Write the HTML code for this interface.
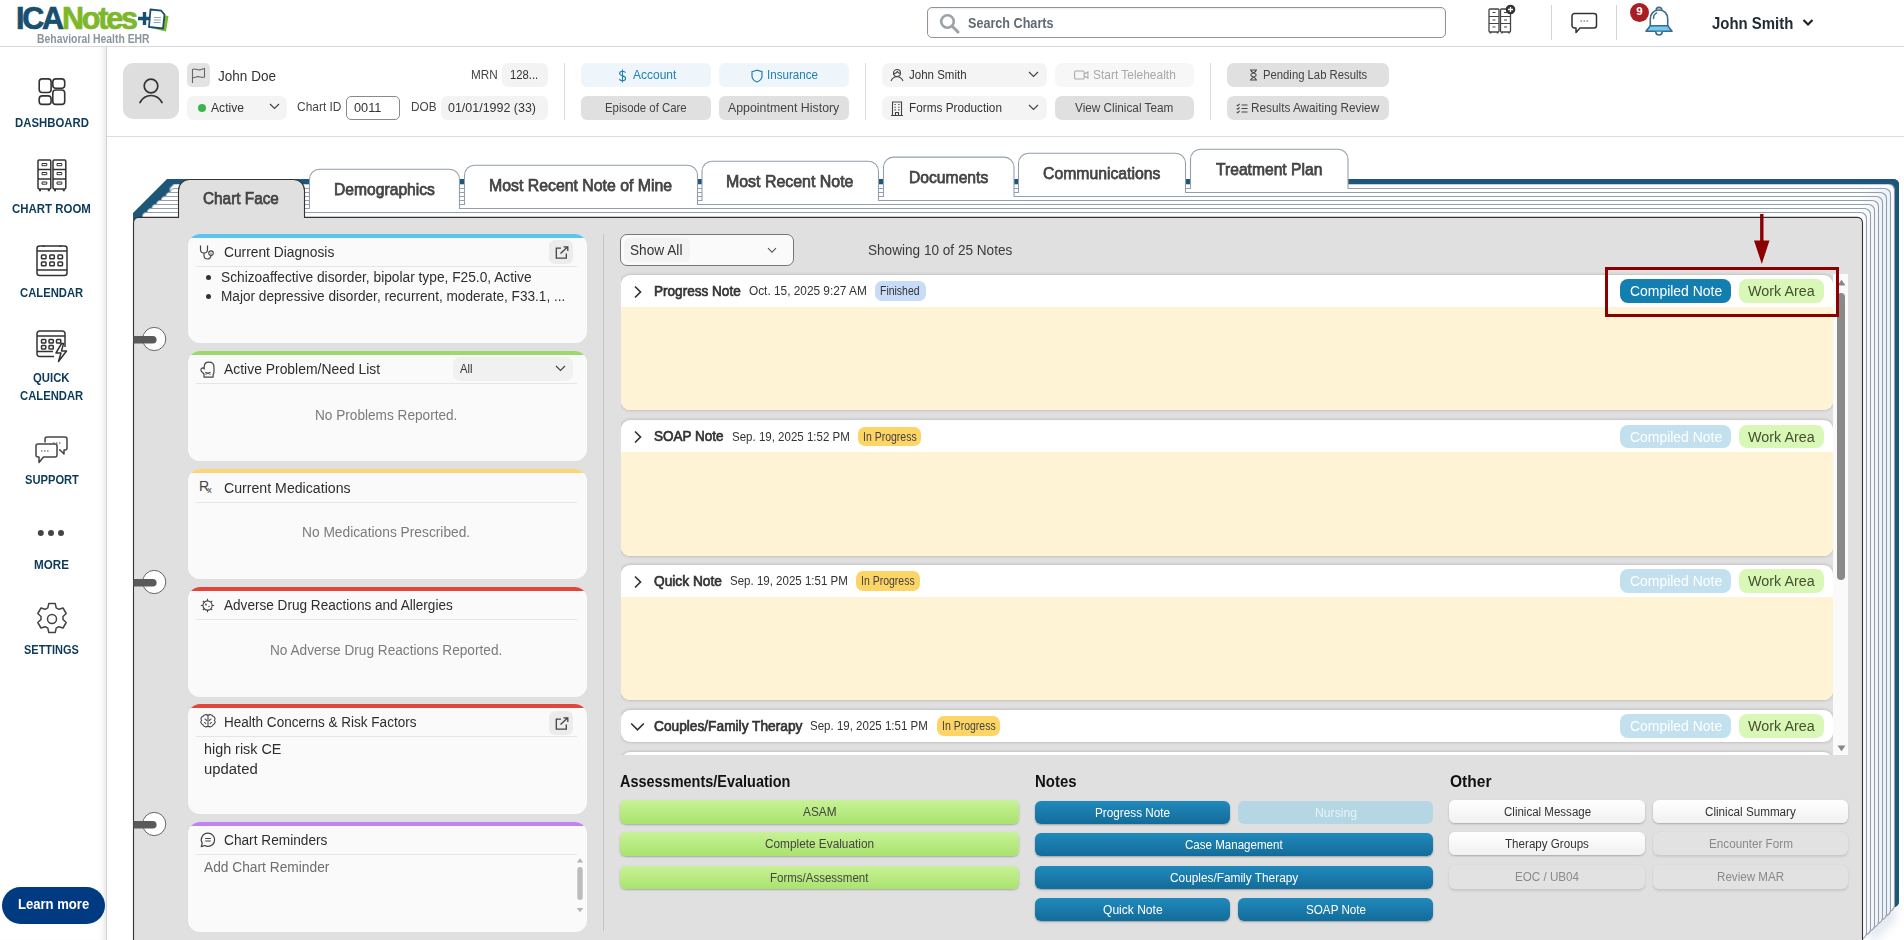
<!DOCTYPE html>
<html><head><meta charset="utf-8">
<style>
*{box-sizing:border-box;margin:0;padding:0}
html,body{width:1904px;height:940px;overflow:hidden;background:#fff;font-family:"Liberation Sans",sans-serif;color:#333}
.a{position:absolute}
.t{position:absolute;white-space:nowrap;line-height:1}
.btn{position:absolute;display:flex;align-items:center;justify-content:center;white-space:nowrap;line-height:1}
svg{position:absolute;overflow:visible}
</style></head><body>

<!-- ===== TOP HEADER ===== -->
<div class="a" style="left:0;top:0;width:1904px;height:47px;background:#fff;border-bottom:1px solid #d9d9d9"></div>
<!-- logo -->
<div class="t" style="left:16px;top:3px;font-size:30.5px;font-weight:bold;letter-spacing:-2.2px;color:#174f6e;-webkit-text-stroke:0.7px currentColor"><span>ICA</span><span style="color:#7cb829;-webkit-text-stroke:0.7px #7cb829">Notes</span></div>
<svg style="left:137px;top:8px" width="32" height="26" viewBox="0 0 32 26">
 <path d="M1 10.5h13M7.5 4v13" stroke="#174f6e" stroke-width="3.4" fill="none"/>
 <path d="M14 20 L29 23.5 L31.5 8 L28 7.5" fill="#7cb829"/>
 <path d="M13.5 1.5 L24 2.5 L27.5 6.5 L26 20.5 L12 19 Z" fill="#fff" stroke="#174f6e" stroke-width="1.8"/>
 <path d="M17 9.5h7M16.8 12h7M16.6 14.5h7" stroke="#8aa3b5" stroke-width="1"/>
</svg>
<div class="t" style="left:37.3px;top:33.10px;font-size:12.03px;font-weight:bold;color:#8a959d;transform:scaleX(0.865);transform-origin:0 0;">Behavioral Health EHR</div>

<!-- search -->
<div class="a" style="left:927px;top:7px;width:519px;height:31px;border:1.3px solid #8c959c;border-radius:5px;box-shadow:inset 0 1px 2px rgba(0,0,0,.08)"></div>
<svg style="left:939px;top:13px" width="22" height="22" viewBox="0 0 22 22"><circle cx="8.5" cy="8.5" r="6.3" stroke="#9aa1a7" stroke-width="2.6" fill="none"/><path d="M13 13l6 6" stroke="#9aa1a7" stroke-width="3" stroke-linecap="round"/></svg>
<div class="t" style="left:967.8px;top:16.20px;font-size:14.78px;font-weight:bold;color:#5f6b74;transform:scaleX(0.854);transform-origin:0 0;">Search Charts</div>

<!-- cabinet-plus icon -->
<svg style="left:1488px;top:7px" width="30" height="28" viewBox="0 0 30 28">
 <g stroke="#444" stroke-width="1.3" fill="#fff">
  <rect x="1" y="2" width="10" height="23" rx="1"/>
  <rect x="12.5" y="2" width="10" height="23" rx="1"/>
 </g>
 <g stroke="#444" stroke-width="1" fill="none">
  <path d="M1 9.5h10M1 16.5h10M12.5 9.5h10M12.5 16.5h10"/>
  <path d="M4.5 5.5h3M4.5 13h3M4.5 20h3M16 5.5h3M16 13h3M16 20h3"/>
  <path d="M2.5 25v1.5M9.5 25v1.5M14 25v1.5M21 25v1.5" stroke-width="1.5"/>
 </g>
 <circle cx="22.5" cy="2.5" r="4.8" fill="#333"/>
 <path d="M22.5 0v5M20 2.5h5" stroke="#fff" stroke-width="1.3"/>
</svg>
<div class="a" style="left:1551px;top:5px;width:1px;height:35px;background:#d5d5d5"></div>
<!-- chat -->
<svg style="left:1571px;top:12px" width="28" height="22" viewBox="0 0 28 22">
 <path d="M3.5 1.5h19.5a2.5 2.5 0 0 1 2.5 2.5v9.5a2.5 2.5 0 0 1-2.5 2.5H9l-4 4.5v-4.5H3.5A2.5 2.5 0 0 1 1 13.5V4a2.5 2.5 0 0 1 2.5-2.5z" fill="#fff" stroke="#333" stroke-width="1.5" stroke-linejoin="round"/>
 <path d="M9.5 9h1.5M12.5 9h1.5M15.5 9h1.5" stroke="#555" stroke-width="1"/>
</svg>
<div class="a" style="left:1616px;top:5px;width:1px;height:35px;background:#d5d5d5"></div>
<!-- bell -->
<svg style="left:1644px;top:6px" width="30" height="30" viewBox="0 0 30 30">
 <path d="M12.2 4.2a2.8 2.8 0 0 1 5.6 0" fill="#fff" stroke="#3b6a8a" stroke-width="1.6"/>
 <path d="M6.3 21.5V13C6.3 7.5 10 4 15 4s8.7 3.5 8.7 9v8.5z" fill="#fff" stroke="#3b6a8a" stroke-width="1.6" stroke-linejoin="round"/>
 <path d="M6.3 19.8h17.4l4.3 5.5H2z" fill="#6fcdf3" stroke="#3b6a8a" stroke-width="1.6" stroke-linejoin="round"/>
 <path d="M11.8 25.8a3.2 3.2 0 0 0 6.4 0" fill="#fff" stroke="#3b6a8a" stroke-width="1.6"/>
 <path d="M9.5 12.5c0-2.8 1.3-4.8 3.3-5.6" fill="none" stroke="#3b6a8a" stroke-width="1.4" stroke-linecap="round"/>
</svg>
<div class="a" style="left:1630px;top:3px;width:19px;height:19px;border-radius:50%;background:#a81e22"></div>
<div class="t" style="left:1630px;top:6px;width:19px;text-align:center;font-size:11.5px;font-weight:bold;color:#fff">9</div>
<div class="t" style="left:1712.0px;top:15.90px;font-size:16.67px;font-weight:bold;color:#222c35;transform:scaleX(0.896);transform-origin:0 0;">John Smith</div>
<svg style="left:1802px;top:18px" width="12" height="9" viewBox="0 0 12 9"><path d="M1.5 2l4.5 4.5 4.5-4.5" stroke="#222" stroke-width="2.2" fill="none"/></svg>

<!-- ===== SIDEBAR ===== -->
<div class="a" style="left:0;top:47px;width:107px;height:893px;background:#fff;border-right:1px solid #d2d2d2;box-shadow:inset -7px 0 6px -5px rgba(0,0,0,.10)"></div>
<!-- dashboard icon -->
<svg style="left:38px;top:78px" width="28" height="28" viewBox="0 0 28 28"><g fill="none" stroke="#333" stroke-width="1.6">
 <rect x="1.2" y="0.9" width="11.9" height="13.6" rx="3"/><rect x="14.8" y="0.9" width="11.9" height="9.3" rx="3"/>
 <rect x="1.2" y="17.9" width="11.9" height="8.5" rx="3"/><rect x="14.8" y="12" width="11.9" height="14.4" rx="3"/></g></svg>
<div class="t" style="left:14.5px;top:117.40px;font-size:12.46px;font-weight:bold;color:#0d3a58;transform:scaleX(0.913);transform-origin:0 0;">DASHBOARD</div>
<!-- chart room icon -->
<svg style="left:37px;top:159px" width="30" height="34" viewBox="0 0 30 34"><g fill="none" stroke="#333" stroke-width="1.5">
 <rect x="1" y="1" width="12.8" height="29" rx="1.2"/><rect x="16" y="1" width="12.8" height="29" rx="1.2"/>
 <path d="M1 10.5h12.8M1 20h12.8M16 10.5h12.8M16 20h12.8"/>
 <path d="M5 4.5h4.8v2.2H5zM5 13.5h4.8v2.2H5zM5 23h4.8v2.2H5zM20 4.5h4.8v2.2H20zM20 13.5h4.8v2.2H20zM20 23h4.8v2.2H20z" stroke-width="1"/>
 <path d="M3 30v2.3M11.8 30v2.3M18 30v2.3M26.8 30v2.3" stroke-width="2"/></g></svg>
<div class="t" style="left:12.0px;top:202.50px;font-size:12.46px;font-weight:bold;color:#0d3a58;transform:scaleX(0.920);transform-origin:0 0;">CHART ROOM</div>
<!-- calendar icon -->
<svg style="left:36px;top:245px" width="32" height="32" viewBox="0 0 32 32"><g fill="none" stroke="#333" stroke-width="1.5">
 <rect x="1" y="1" width="30" height="29.5" rx="2.5"/><path d="M1 6h30M1 25h30"/>
 <path d="M7.5 0.5v1.5M24.5 0.5v1.5" stroke-width="2"/>
 <rect x="5.5" y="10" width="4.5" height="3.8" rx="0.8"/><rect x="13.8" y="10" width="4.5" height="3.8" rx="0.8"/><rect x="22" y="10" width="4.5" height="3.8" rx="0.8"/>
 <rect x="5.5" y="17" width="4.5" height="3.8" rx="0.8"/><rect x="13.8" y="17" width="4.5" height="3.8" rx="0.8"/><rect x="22" y="17" width="4.5" height="3.8" rx="0.8"/></g></svg>
<div class="t" style="left:19.9px;top:287.00px;font-size:12.46px;font-weight:bold;color:#0d3a58;transform:scaleX(0.904);transform-origin:0 0;">CALENDAR</div>
<!-- quick calendar -->
<svg style="left:36px;top:330px" width="32" height="33" viewBox="0 0 32 33"><g fill="none" stroke="#333" stroke-width="1.5">
 <path d="M18 26.5H3.5A2.5 2.5 0 0 1 1 24V3.5A2.5 2.5 0 0 1 3.5 1h23A2.5 2.5 0 0 1 29 3.5V17"/><path d="M1 6h28M1 21.5h16"/>
 <rect x="5.5" y="9.5" width="4.3" height="3.6" rx="0.8"/><rect x="13" y="9.5" width="4.3" height="3.6" rx="0.8"/><rect x="20.5" y="9.5" width="4.3" height="3.6" rx="0.8"/>
 <rect x="5.5" y="15.5" width="4.3" height="3.6" rx="0.8"/><rect x="13" y="15.5" width="4.3" height="3.6" rx="0.8"/>
 <path d="M25.5 13.5l-5.5 9.5h5l-2.5 8.5 8-10.5h-5l2-7.5z" fill="#fff" stroke-linejoin="round"/></g></svg>
<div class="t" style="left:33.2px;top:372.30px;font-size:12.46px;font-weight:bold;color:#0d3a58;transform:scaleX(0.910);transform-origin:0 0;">QUICK</div>
<div class="t" style="left:19.9px;top:389.60px;font-size:12.46px;font-weight:bold;color:#0d3a58;transform:scaleX(0.904);transform-origin:0 0;">CALENDAR</div>
<!-- support -->
<svg style="left:35px;top:436px" width="34" height="30" viewBox="0 0 34 30"><g fill="none" stroke="#444" stroke-width="1.5" stroke-linejoin="round">
 <path d="M10 6.5V3a2 2 0 0 1 2-2h18a2 2 0 0 1 2 2v9a2 2 0 0 1-2 2h-1v4l-4-4h-1"/>
 <path d="M3 8h17a2 2 0 0 1 2 2v9a2 2 0 0 1-2 2H8.5L4 26.5V21H3a2 2 0 0 1-2-2v-9a2 2 0 0 1 2-2z" fill="#fff"/>
 <path d="M6 15h1.5M9 15h1.5M12 15h1.5M18 7h1.5M21 7h1.5M24 7h1.5" stroke-width="1.2"/></g></svg>
<div class="t" style="left:24.5px;top:474.40px;font-size:12.46px;font-weight:bold;color:#0d3a58;transform:scaleX(0.896);transform-origin:0 0;">SUPPORT</div>
<!-- more -->
<svg style="left:36px;top:529px" width="30" height="8" viewBox="0 0 30 8"><circle cx="4.8" cy="4" r="3" fill="#444"/><circle cx="15" cy="4" r="3" fill="#444"/><circle cx="25" cy="4" r="3" fill="#444"/></svg>
<div class="t" style="left:34.0px;top:559.40px;font-size:12.46px;font-weight:bold;color:#0d3a58;transform:scaleX(0.936);transform-origin:0 0;">MORE</div>
<!-- settings -->
<svg style="left:35px;top:602px" width="34" height="34" viewBox="0 0 34 34"><g fill="none" stroke="#444" stroke-width="1.5" stroke-linejoin="round">
 <path d="M13.8 1.5h6.4l1 4.3 2.6 1.5 4.2-1.3 3.2 5.5-3.2 3v3l3.2 3-3.2 5.5-4.2-1.3-2.6 1.5-1 4.3h-6.4l-1-4.3-2.6-1.5-4.2 1.3-3.2-5.5 3.2-3v-3l-3.2-3 3.2-5.5 4.2 1.3 2.6-1.5z"/>
 <circle cx="17" cy="17" r="4.5"/></g></svg>
<div class="t" style="left:24.0px;top:644.40px;font-size:12.46px;font-weight:bold;color:#0d3a58;transform:scaleX(0.882);transform-origin:0 0;">SETTINGS</div>
<!-- learn more -->
<div class="a" style="left:2px;top:887px;width:103px;height:37px;border-radius:19px;background:#003a80"></div>
<div class="t" style="left:18.2px;top:896.60px;font-size:14.93px;font-weight:bold;color:#fff;transform:scaleX(0.876);transform-origin:0 0;">Learn more</div>

<!-- ===== PATIENT HEADER ===== -->
<div class="a" style="left:107px;top:136px;width:1797px;height:1px;background:#dddddd"></div>
<div class="a" style="left:123px;top:63px;width:56px;height:56px;border-radius:10px;background:#dedede"></div>
<svg style="left:136px;top:76px" width="30" height="30" viewBox="0 0 30 30"><circle cx="15" cy="10" r="6.8" fill="none" stroke="#333" stroke-width="1.7"/><path d="M4 26.5c2.5-4.5 6.3-7 11-7s8.5 2.5 11 7" fill="none" stroke="#333" stroke-width="1.7" stroke-linecap="round"/></svg>
<div class="a" style="left:187px;top:63px;width:23px;height:24px;border-radius:5px;background:#e3e3e3"></div>
<svg style="left:191px;top:67px" width="16" height="17" viewBox="0 0 16 17"><path d="M1.5 16V2.5c3-1.8 5.5 1.5 8.5 0l3.5-1V10c-3 1.5-5.5-1.5-8.5 0l-3.5 1" fill="none" stroke="#666" stroke-width="1.1"/></svg>
<div class="t" style="left:218.0px;top:69.00px;font-size:14.49px;color:#333;transform:scaleX(0.935);transform-origin:0 0;">John Doe</div>
<div class="t" style="left:470.5px;top:70.20px;font-size:11.88px;color:#444;transform:scaleX(0.987);transform-origin:0 0;">MRN</div>
<div class="a" style="left:502px;top:63px;width:46px;height:24px;border-radius:6px;background:#f3f3f3"></div>
<div class="t" style="left:509.6px;top:70.20px;font-size:11.88px;color:#333;transform:scaleX(0.948);transform-origin:0 0;">128...</div>
<div class="a" style="left:187px;top:96px;width:100px;height:24px;border-radius:7px;background:#f4f4f4"></div>
<div class="a" style="left:198px;top:103.5px;width:8px;height:8px;border-radius:50%;background:#3bb54a"></div>
<div class="t" style="left:210.5px;top:102.70px;font-size:11.88px;color:#333;transform:scaleX(1.020);transform-origin:0 0;">Active</div>
<svg style="left:269px;top:103px" width="11" height="7" viewBox="0 0 11 7"><path d="M1 1l4.5 4.5L10 1" fill="none" stroke="#444" stroke-width="1.2"/></svg>
<div class="t" style="left:297.2px;top:102.20px;font-size:11.88px;color:#444;transform:scaleX(1.006);transform-origin:0 0;">Chart ID</div>
<div class="a" style="left:346px;top:96px;width:54px;height:24px;border-radius:5px;border:1px solid #8a8a8a;background:#fff"></div>
<div class="t" style="left:354.3px;top:102.70px;font-size:11.88px;color:#333;transform:scaleX(1.072);transform-origin:0 0;">0011</div>
<div class="t" style="left:410.6px;top:102.20px;font-size:11.88px;color:#444;transform:scaleX(0.994);transform-origin:0 0;">DOB</div>
<div class="a" style="left:441px;top:96px;width:107px;height:24px;border-radius:6px;background:#f3f3f3"></div>
<div class="t" style="left:447.7px;top:102.70px;font-size:11.88px;color:#333;transform:scaleX(1.049);transform-origin:0 0;">01/01/1992 (33)</div>
<div class="a" style="left:564px;top:63px;width:1px;height:57px;background:#dcdcdc"></div>

<div class="a" style="left:581px;top:63px;width:130px;height:24px;border-radius:6px;background:#eef5fb"></div>
<svg style="left:617.5px;top:68.5px" width="9" height="14" viewBox="0 0 9 14"><path d="M7.5 3.7C7 2.8 6 2.3 4.6 2.3 3 2.3 1.6 3.1 1.6 4.5s1.3 1.8 3 2.3c1.7.5 3 1 3 2.5S6.2 11.7 4.5 11.7C3 11.7 2 11.1 1.4 10.1M4.5 0.5v13" fill="none" stroke="#1e7fb3" stroke-width="1.1"/></svg>
<div class="t" style="left:632.8px;top:69.00px;font-size:12.32px;color:#1e7fb3;transform:scaleX(0.975);transform-origin:0 0;">Account</div>
<div class="a" style="left:719px;top:63px;width:130px;height:24px;border-radius:6px;background:#eef5fb"></div>
<svg style="left:750.5px;top:68.5px" width="12" height="14" viewBox="0 0 12 14"><path d="M6 1.2L1 2.8v4.2c0 3 2.2 4.9 5 6 2.8-1.1 5-3 5-6V2.8z" fill="none" stroke="#1e7fb3" stroke-width="1.2"/></svg>
<div class="t" style="left:767.2px;top:69.00px;font-size:12.32px;color:#1e7fb3;transform:scaleX(0.941);transform-origin:0 0;">Insurance</div>
<div class="a" style="left:581px;top:96px;width:130px;height:24px;border-radius:6px;background:#e0e0e0"></div>
<div class="t" style="left:604.6px;top:102.10px;font-size:12.32px;color:#444;transform:scaleX(0.925);transform-origin:0 0;">Episode of Care</div>
<div class="a" style="left:719px;top:96px;width:130px;height:24px;border-radius:6px;background:#e0e0e0"></div>
<div class="t" style="left:728.1px;top:102.10px;font-size:12.32px;color:#444;transform:scaleX(1.004);transform-origin:0 0;">Appointment History</div>
<div class="a" style="left:865px;top:63px;width:1px;height:57px;background:#dcdcdc"></div>

<div class="a" style="left:882px;top:63px;width:165px;height:24px;border-radius:7px;background:#f4f4f4"></div>
<svg style="left:890px;top:68px" width="14" height="14" viewBox="0 0 14 14"><circle cx="7" cy="5" r="3.5" fill="none" stroke="#444" stroke-width="1.1"/><path d="M1 13c1.2-3 3.3-4.3 6-4.3s4.8 1.3 6 4.3M3.5 5.5c1.5.3 3-.5 3.8-2 .8 1.3 2 2 3.4 2" fill="none" stroke="#444" stroke-width="1.1"/></svg>
<div class="t" style="left:908.8px;top:70.20px;font-size:11.88px;color:#333;transform:scaleX(0.969);transform-origin:0 0;">John Smith</div>
<svg style="left:1028px;top:71px" width="11" height="7" viewBox="0 0 11 7"><path d="M1 1l4.5 4.5L10 1" fill="none" stroke="#444" stroke-width="1.2"/></svg>
<div class="a" style="left:882px;top:96px;width:165px;height:24px;border-radius:7px;background:#f4f4f4"></div>
<svg style="left:890px;top:101px" width="14" height="15" viewBox="0 0 14 15"><path d="M1 14.5h12M2.5 14.5V1h9v13.5M5.5 14.5v-3h3v3M4.5 3.5h1.3M8.2 3.5h1.3M4.5 6.2h1.3M8.2 6.2h1.3M4.5 8.9h1.3M8.2 8.9h1.3" fill="none" stroke="#444" stroke-width="1.1"/></svg>
<div class="t" style="left:908.8px;top:102.70px;font-size:11.88px;color:#333;transform:scaleX(0.992);transform-origin:0 0;">Forms Production</div>
<svg style="left:1028px;top:104px" width="11" height="7" viewBox="0 0 11 7"><path d="M1 1l4.5 4.5L10 1" fill="none" stroke="#444" stroke-width="1.2"/></svg>
<div class="a" style="left:1055px;top:63px;width:139px;height:24px;border-radius:7px;background:#f7f7f7"></div>
<svg style="left:1074px;top:70px" width="15" height="10" viewBox="0 0 15 10"><rect x="0.6" y="1" width="9.5" height="8" rx="1" fill="none" stroke="#aaa" stroke-width="1.1"/><path d="M10.1 4l3.8-2v6l-3.8-2" fill="none" stroke="#aaa" stroke-width="1.1"/></svg>
<div class="t" style="left:1092.6px;top:69.00px;font-size:12.32px;color:#a8a8a8;transform:scaleX(0.970);transform-origin:0 0;">Start Telehealth</div>
<div class="a" style="left:1055px;top:96px;width:139px;height:24px;border-radius:7px;background:#e0e0e0"></div>
<div class="t" style="left:1075.0px;top:102.10px;font-size:12.32px;color:#444;transform:scaleX(0.956);transform-origin:0 0;">View Clinical Team</div>
<div class="a" style="left:1210px;top:63px;width:1px;height:57px;background:#dcdcdc"></div>
<div class="a" style="left:1227px;top:63px;width:162px;height:24px;border-radius:7px;background:#e0e0e0"></div>
<svg style="left:1249px;top:69px" width="9" height="12" viewBox="0 0 9 12"><path d="M1 1h7M1 11h7M1.8 1c0 3 5.4 3 5.4 5S1.8 8 1.8 11M7.2 1c0 3-5.4 3-5.4 5s5.4 2 5.4 5" fill="none" stroke="#444" stroke-width="1.1"/></svg>
<div class="t" style="left:1262.7px;top:69.00px;font-size:12.32px;color:#444;transform:scaleX(0.917);transform-origin:0 0;">Pending Lab Results</div>
<div class="a" style="left:1227px;top:96px;width:162px;height:24px;border-radius:7px;background:#e0e0e0"></div>
<svg style="left:1235.5px;top:102.5px" width="12" height="11" viewBox="0 0 12 11"><path d="M0.8 1.8l1 1 1.8-2M0.8 5.3l1 1 1.8-2M0.8 8.8l1 1 1.8-2M5.5 2h6M5.5 5.5h6M5.5 9h6" fill="none" stroke="#444" stroke-width="1.1"/></svg>
<div class="t" style="left:1250.8px;top:102.10px;font-size:12.32px;color:#444;transform:scaleX(0.957);transform-origin:0 0;">Results Awaiting Review</div>

<!-- ===== BINDER ===== -->
<svg style="left:0;top:0" width="1904" height="940" viewBox="0 0 1904 940">
<defs><linearGradient id="pg" gradientUnits="userSpaceOnUse" x1="1858" y1="0" x2="1885" y2="0"><stop offset="0" stop-color="#ffffff"/><stop offset="1" stop-color="#eef2f9"/></linearGradient><filter id="bl" x="-50%" y="-50%" width="200%" height="200%"><feGaussianBlur stdDeviation="4"/></filter></defs>
<path d="M1866 925L1896 898V920L1872 944Z" fill="#a9b8d2" opacity="0.3" filter="url(#bl)"/>
<path d="M167 179H1893.5a5.5 5.5 0 0 1 5.5 5.5V901.5a5.5 5.5 0 0 1-5.5 5.5H133V213Z" fill="#1c5678"/>
<path d="M174 184H1888.5a6 6 0 0 1 6 6V905a7 7 0 0 1-7 7H170V188Z" fill="#fbfcfe" stroke="#939fac" stroke-width="1.1"/>
<path d="M167 179H1893.5a5.5 5.5 0 0 1 5.5 5.5V901.5a5.5 5.5 0 0 1-5.5 5.5H1895V184H172Z" fill="#1c5678"/>
<path d="M170.5 192.5a4 4 0 0 1 4 -4H1190.5V159.3a10 10 0 0 1 10 -10H1338a10 10 0 0 1 10 10V188.5H1884.5a6 6 0 0 1 6 6V910.0a6 6 0 0 1 -6 6H170.5Z" fill="url(#pg)" stroke="#939fac" stroke-width="1.1"/>
<path d="M165.83 196.5a4 4 0 0 1 4 -4H1018.5V163.2a10 10 0 0 1 10 -10H1175.5a10 10 0 0 1 10 10V192.5H1880.5a6 6 0 0 1 6 6V913.8a6 6 0 0 1 -6 6H165.83Z" fill="url(#pg)" stroke="#939fac" stroke-width="1.1"/>
<path d="M161.16 200.5a4 4 0 0 1 4 -4H883.5V167.1a10 10 0 0 1 10 -10H1004a10 10 0 0 1 10 10V196.5H1876.5a6 6 0 0 1 6 6V917.6a6 6 0 0 1 -6 6H161.16Z" fill="url(#pg)" stroke="#939fac" stroke-width="1.1"/>
<path d="M156.49 204.5a4 4 0 0 1 4 -4H702V171.3a10 10 0 0 1 10 -10H868.5a10 10 0 0 1 10 10V200.5H1872.5a6 6 0 0 1 6 6V921.4a6 6 0 0 1 -6 6H156.49Z" fill="url(#pg)" stroke="#939fac" stroke-width="1.1"/>
<path d="M151.82 208.5a4 4 0 0 1 4 -4H464.5V175.2a10 10 0 0 1 10 -10H687.5a10 10 0 0 1 10 10V204.5H1868.5a6 6 0 0 1 6 6V925.2a6 6 0 0 1 -6 6H151.82Z" fill="url(#pg)" stroke="#939fac" stroke-width="1.1"/>
<path d="M147.15 212.5a4 4 0 0 1 4 -4H309.5V179.3a10 10 0 0 1 10 -10H449.5a10 10 0 0 1 10 10V208.5H1864.5a6 6 0 0 1 6 6V929.0a6 6 0 0 1 -6 6H147.15Z" fill="url(#pg)" stroke="#939fac" stroke-width="1.1"/>
<path d="M142.48 216.5a4 4 0 0 1 4 -4H1860.5a6 6 0 0 1 6 6V932.8a6 6 0 0 1 -6 6H142.48Z" fill="url(#pg)" stroke="#939fac" stroke-width="1.1"/>
<path d="M133.5 950V222.4a5 5 0 0 1 5 -5H178.5V190.5a11 11 0 0 1 11 -11H293.5a11 11 0 0 1 11 11V217.4H1857.5a5 5 0 0 1 5 5V950Z" fill="#e0e0e0" stroke="#333" stroke-width="1.1"/>
</svg>

<div class="t" style="left:203.0px;top:190.90px;font-size:16.96px;color:#444;transform:scaleX(0.906);transform-origin:0 0;-webkit-text-stroke:0.75px #444;">Chart Face</div>
<div class="t" style="left:333.6px;top:181.90px;font-size:16.81px;color:#444;transform:scaleX(0.932);transform-origin:0 0;-webkit-text-stroke:0.75px #444;">Demographics</div>
<div class="t" style="left:489.0px;top:177.90px;font-size:16.81px;color:#444;transform:scaleX(0.943);transform-origin:0 0;-webkit-text-stroke:0.75px #444;">Most Recent Note of Mine</div>
<div class="t" style="left:726.4px;top:173.90px;font-size:16.81px;color:#444;transform:scaleX(0.948);transform-origin:0 0;-webkit-text-stroke:0.75px #444;">Most Recent Note</div>
<div class="t" style="left:908.6px;top:169.90px;font-size:16.81px;color:#444;transform:scaleX(0.933);transform-origin:0 0;-webkit-text-stroke:0.75px #444;">Documents</div>
<div class="t" style="left:1043.2px;top:165.90px;font-size:16.81px;color:#444;transform:scaleX(0.938);transform-origin:0 0;-webkit-text-stroke:0.75px #444;">Communications</div>
<div class="t" style="left:1215.7px;top:161.90px;font-size:16.81px;color:#444;transform:scaleX(0.931);transform-origin:0 0;-webkit-text-stroke:0.75px #444;">Treatment Plan</div>
<svg style="left:130px;top:324.3px" width="40" height="30" viewBox="0 0 40 30"><circle cx="24.2" cy="15" r="11.6" fill="#fff" stroke="#666" stroke-width="1"/><path d="M3.5 12H22.8a3.8 3.8 0 0 1 0 7.6H3.5z" fill="#5a5a5a"/></svg>
<svg style="left:130px;top:567px" width="40" height="30" viewBox="0 0 40 30"><circle cx="24.2" cy="15" r="11.6" fill="#fff" stroke="#666" stroke-width="1"/><path d="M3.5 12H22.8a3.8 3.8 0 0 1 0 7.6H3.5z" fill="#5a5a5a"/></svg>
<svg style="left:130px;top:809.3px" width="40" height="30" viewBox="0 0 40 30"><circle cx="24.2" cy="15" r="11.6" fill="#fff" stroke="#666" stroke-width="1"/><path d="M3.5 12H22.8a3.8 3.8 0 0 1 0 7.6H3.5z" fill="#5a5a5a"/></svg>
<div class="a" style="left:603px;top:234px;width:1px;height:697px;background:#c4c4c4"></div>
<div class="a" style="left:188px;top:233.7px;width:399px;height:109.6px;border-radius:12px;background:#fafafa;overflow:hidden"><div class="a" style="left:0;top:0;width:399px;height:4px;background:#5bc4f1"></div></div>
<svg style="left:199px;top:244.7px" width="16" height="15" viewBox="0 0 16 15"><path d="M1.5 0.5v4a3.5 3.5 0 0 0 7 0v-4M5 8v2.5a3.5 3.5 0 0 0 7 0V9.5" fill="none" stroke="#444" stroke-width="1.2"/><circle cx="12" cy="8.2" r="2.3" fill="none" stroke="#444" stroke-width="1.1"/><circle cx="12" cy="8.2" r="0.6" fill="#444"/></svg>
<div class="t" style="left:224.3px;top:245.00px;font-size:14.06px;color:#2e2e2e;transform:scaleX(0.981);transform-origin:0 0;">Current Diagnosis</div>
<div class="a" style="left:196px;top:266.0px;width:381px;height:1px;background:#e6e6e6"></div>
<div class="a" style="left:549px;top:240.2px;width:24px;height:24px;border-radius:6px;background:#ececec"></div>
<svg style="left:555px;top:246.2px" width="14" height="13" viewBox="0 0 14 13"><path d="M6 2.2H1.3v10h10V7.5" fill="none" stroke="#444" stroke-width="1.3"/><path d="M5.5 7.5l7-6.5M8.5 0.8h4.3v4.2" fill="none" stroke="#444" stroke-width="1.3"/></svg>
<div class="a" style="left:188px;top:351.1px;width:399px;height:109.6px;border-radius:12px;background:#fafafa;overflow:hidden"><div class="a" style="left:0;top:0;width:399px;height:4px;background:#9cd86a"></div></div>
<svg style="left:199.5px;top:361.3px" width="16" height="18" viewBox="0 0 16 18"><path d="M4.2 7.8V6C4.2 3 6.2 1.2 9 1.2s5 1.8 5 5V11c0 1-.6 1.8-.9 2.5v2.6H4V13L1.3 10.2C.7 9.5.8 7.4 2 7.1l2.2-.6V8.5" fill="none" stroke="#444" stroke-width="1.2" stroke-linejoin="round"/><path d="M5.3 11.3l5.2 2M5.3 13.3l5.2-2" stroke="#444" stroke-width="1.1"/></svg>
<div class="t" style="left:224.3px;top:362.40px;font-size:14.06px;color:#2e2e2e;transform:scaleX(0.990);transform-origin:0 0;">Active Problem/Need List</div>
<div class="a" style="left:196px;top:383.4px;width:381px;height:1px;background:#e6e6e6"></div>
<div class="a" style="left:188px;top:469.2px;width:399px;height:109.6px;border-radius:12px;background:#fafafa;overflow:hidden"><div class="a" style="left:0;top:0;width:399px;height:4px;background:#fcd676"></div></div>
<div class="t" style="left:199px;top:478.7px;font-size:14px;color:#444">R<span style="font-size:9px;position:relative;left:-2px;top:2px">x</span></div>
<div class="t" style="left:224.3px;top:480.50px;font-size:14.06px;color:#2e2e2e;transform:scaleX(1.007);transform-origin:0 0;">Current Medications</div>
<div class="a" style="left:196px;top:501.5px;width:381px;height:1px;background:#e6e6e6"></div>
<div class="a" style="left:188px;top:587.0px;width:399px;height:109.6px;border-radius:12px;background:#fafafa;overflow:hidden"><div class="a" style="left:0;top:0;width:399px;height:4px;background:#e2453a"></div></div>
<svg style="left:199.5px;top:598.0px" width="15" height="15" viewBox="0 0 15 15"><circle cx="7.5" cy="7.5" r="4.6" fill="none" stroke="#444" stroke-width="1.1"/><path d="M7.5 0.8v2.1M7.5 12.1v2.1M0.8 7.5h2.1M12.1 7.5h2.1M2.8 2.8l1.5 1.5M10.7 10.7l1.5 1.5M2.8 12.2l1.5-1.5M10.7 4.3l1.5-1.5" stroke="#444" stroke-width="1.1"/><circle cx="6" cy="6.5" r="0.9" fill="#444"/><circle cx="9" cy="8.5" r="0.7" fill="#444"/></svg>
<div class="t" style="left:224.3px;top:598.30px;font-size:14.06px;color:#2e2e2e;transform:scaleX(0.967);transform-origin:0 0;">Adverse Drug Reactions and Allergies</div>
<div class="a" style="left:196px;top:619.3px;width:381px;height:1px;background:#e6e6e6"></div>
<div class="a" style="left:188px;top:704.0px;width:399px;height:109.6px;border-radius:12px;background:#fafafa;overflow:hidden"><div class="a" style="left:0;top:0;width:399px;height:4px;background:#e2453a"></div></div>
<svg style="left:199.5px;top:714.3px" width="16" height="14" viewBox="0 0 16 14"><path d="M8 1.5C6.5 0 3.5 0.5 3 2.5 1 2.8 0.5 5 1.5 6.3 0.3 7.5 0.8 10 2.8 10.5c.3 2 2.8 3 5.2 1.8 2.4 1.2 4.9.2 5.2-1.8 2-.5 2.5-3 1.3-4.2 1-1.3.5-3.5-1.5-3.8C12.5 0.5 9.5 0 8 1.5zM8 1.5v10.8M4.5 5c1 0 2 .8 2 2M11.5 5c-1 0-2 .8-2 2M4 8.5c1 0 1.8.5 2 1.5M12 8.5c-1 0-1.8.5-2 1.5" fill="none" stroke="#444" stroke-width="1.1"/></svg>
<div class="t" style="left:224.3px;top:715.30px;font-size:14.06px;color:#2e2e2e;transform:scaleX(0.963);transform-origin:0 0;">Health Concerns &amp; Risk Factors</div>
<div class="a" style="left:196px;top:736.3px;width:381px;height:1px;background:#e6e6e6"></div>
<div class="a" style="left:549px;top:710.5px;width:24px;height:24px;border-radius:6px;background:#ececec"></div>
<svg style="left:555px;top:716.5px" width="14" height="13" viewBox="0 0 14 13"><path d="M6 2.2H1.3v10h10V7.5" fill="none" stroke="#444" stroke-width="1.3"/><path d="M5.5 7.5l7-6.5M8.5 0.8h4.3v4.2" fill="none" stroke="#444" stroke-width="1.3"/></svg>
<div class="a" style="left:188px;top:822.1px;width:399px;height:109.6px;border-radius:12px;background:#fafafa;overflow:hidden"><div class="a" style="left:0;top:0;width:399px;height:4px;background:#c182f3"></div></div>
<svg style="left:199.5px;top:832.1px" width="16" height="16" viewBox="0 0 16 16"><path d="M8 1.2a6.6 6.6 0 0 1 0 13.2c-1.2 0-2.3-.3-3.3-.9L1.2 14.6l1.1-3.3A6.6 6.6 0 0 1 8 1.2z" fill="none" stroke="#444" stroke-width="1.2" stroke-linejoin="round"/><path d="M5.2 6.5h5.6M5.2 9h5.6" stroke="#444" stroke-width="1.1"/></svg>
<div class="t" style="left:224.3px;top:833.40px;font-size:14.06px;color:#2e2e2e;transform:scaleX(0.974);transform-origin:0 0;">Chart Reminders</div>
<div class="a" style="left:196px;top:854.4px;width:381px;height:1px;background:#e6e6e6"></div>
<div class="a" style="left:205.5px;top:275px;width:5px;height:5px;border-radius:50%;background:#333"></div>
<div class="a" style="left:205.5px;top:294.3px;width:5px;height:5px;border-radius:50%;background:#333"></div>
<div class="t" style="left:220.7px;top:270.80px;font-size:13.91px;color:#2e2e2e;transform:scaleX(0.988);transform-origin:0 0;">Schizoaffective disorder, bipolar type, F25.0, Active</div>
<div class="t" style="left:220.7px;top:290.20px;font-size:13.91px;color:#2e2e2e;transform:scaleX(0.979);transform-origin:0 0;">Major depressive disorder, recurrent, moderate, F33.1, ...</div>
<div class="a" style="left:453px;top:357px;width:120px;height:24px;border-radius:7px;background:#f1f1f1"></div>
<div class="t" style="left:460.0px;top:363.70px;font-size:11.88px;color:#333;transform:scaleX(0.946);transform-origin:0 0;">All</div>
<svg style="left:554.5px;top:365px" width="11" height="7" viewBox="0 0 11 7"><path d="M1 1l4.5 4.5L10 1" fill="none" stroke="#444" stroke-width="1.2"/></svg>
<div class="t" style="left:315.0px;top:409.40px;font-size:13.91px;color:#7b7b7b;transform:scaleX(0.980);transform-origin:0 0;">No Problems Reported.</div>
<div class="t" style="left:302.3px;top:526.40px;font-size:13.91px;color:#7b7b7b;transform:scaleX(0.989);transform-origin:0 0;">No Medications Prescribed.</div>
<div class="t" style="left:270.4px;top:643.90px;font-size:13.91px;color:#7b7b7b;transform:scaleX(0.982);transform-origin:0 0;">No Adverse Drug Reactions Reported.</div>
<div class="t" style="left:204.1px;top:743.20px;font-size:13.91px;color:#2e2e2e;transform:scaleX(1.032);transform-origin:0 0;">high risk CE</div>
<div class="t" style="left:204.1px;top:763.20px;font-size:13.91px;color:#2e2e2e;transform:scaleX(1.068);transform-origin:0 0;">updated</div>
<div class="t" style="left:204.1px;top:861.00px;font-size:13.91px;color:#6e6e6e;transform:scaleX(0.989);transform-origin:0 0;">Add Chart Reminder</div>
<svg style="left:576px;top:856px" width="8" height="58" viewBox="0 0 8 58"><path d="M0.8 6.5h6.4L4 2.2z" fill="#b4b4b4"/><rect x="1.3" y="11" width="5.4" height="33" rx="2.7" fill="#bcbcbc"/><path d="M0.8 52h6.4L4 56.2z" fill="#b4b4b4"/></svg>

<div class="a" style="left:620px;top:234px;width:174px;height:32px;border-radius:7px;border:1px solid #777;background:#fafafa"></div>
<div class="a" style="left:624px;top:238px;width:66px;height:24px;border-radius:5px;background:#f3f3f3"></div>
<div class="t" style="left:630.0px;top:242.80px;font-size:14.49px;color:#333;transform:scaleX(0.944);transform-origin:0 0;">Show All</div>
<svg style="left:767px;top:247px" width="10" height="7" viewBox="0 0 10 7"><path d="M1 1.2l4 4 4-4" fill="none" stroke="#555" stroke-width="1.1"/></svg>
<div class="t" style="left:868.1px;top:242.80px;font-size:14.49px;color:#3a3a3a;transform:scaleX(0.938);transform-origin:0 0;">Showing 10 of 25 Notes</div>
<div class="a" style="left:620.5px;top:268px;width:1227.5px;height:486.8px;overflow:hidden">
<div class="a" style="left:0.0px;top:6.5px;width:1212px;height:135.5px;border-radius:9px;background:#fff;box-shadow:0 0 3.5px rgba(0,0,0,.25);overflow:hidden">
<div class="a" style="left:0;top:32px;width:1212px;height:104px;background:#fff3d5"></div>
<svg style="left:12px;top:10px" width="10" height="14" viewBox="0 0 10 14"><path d="M2 1.5l5.5 5.5L2 12.5" fill="none" stroke="#333" stroke-width="1.7"/></svg>
<div class="t" style="left:33.0px;top:9.40px;font-size:14.93px;color:#333;transform:scaleX(0.909);transform-origin:0 0;-webkit-text-stroke:0.7px #333;">Progress Note</div>
<div class="t" style="left:128.1px;top:10.50px;font-size:12.32px;color:#333;transform:scaleX(0.961);transform-origin:0 0;">Oct. 15, 2025 9:27 AM</div>
<div class="a" style="left:254.4px;top:6.5px;width:50.8px;height:19.5px;border-radius:7px;background:#c8dbf7"></div>
<div class="t" style="left:259.9px;top:10.50px;font-size:12.32px;color:#333;transform:scaleX(0.850);transform-origin:0 0;">Finished</div>
<div class="a" style="left:999.5px;top:4.6px;width:111px;height:23.7px;border-radius:8px;background:#137fb0"></div>
<div class="t" style="left:1009.2px;top:9.70px;font-size:14.49px;color:#fff;transform:scaleX(0.962);transform-origin:0 0;">Compiled Note</div>
<div class="a" style="left:1118.5px;top:4.6px;width:85px;height:23.7px;border-radius:8px;background:#d9f8b8"></div>
<div class="t" style="left:1127.6px;top:9.70px;font-size:14.49px;color:#46512e;transform:scaleX(0.990);transform-origin:0 0;">Work Area</div>
</div>
<div class="a" style="left:0.0px;top:152.0px;width:1212px;height:135.5px;border-radius:9px;background:#fff;box-shadow:0 0 3.5px rgba(0,0,0,.25);overflow:hidden">
<div class="a" style="left:0;top:32px;width:1212px;height:104px;background:#fff3d5"></div>
<svg style="left:12px;top:10px" width="10" height="14" viewBox="0 0 10 14"><path d="M2 1.5l5.5 5.5L2 12.5" fill="none" stroke="#333" stroke-width="1.7"/></svg>
<div class="t" style="left:33.0px;top:9.40px;font-size:14.93px;color:#333;transform:scaleX(0.905);transform-origin:0 0;-webkit-text-stroke:0.7px #333;">SOAP Note</div>
<div class="t" style="left:111.0px;top:10.50px;font-size:12.32px;color:#333;transform:scaleX(0.935);transform-origin:0 0;">Sep. 19, 2025 1:52 PM</div>
<div class="a" style="left:237.3px;top:6.5px;width:63.6px;height:19.5px;border-radius:7px;background:#fdd466"></div>
<div class="t" style="left:242.6px;top:10.50px;font-size:12.32px;color:#444;transform:scaleX(0.852);transform-origin:0 0;">In Progress</div>
<div class="a" style="left:999.5px;top:4.6px;width:111px;height:23.7px;border-radius:8px;background:#c2e0ee"></div>
<div class="t" style="left:1009.2px;top:9.70px;font-size:14.49px;color:#fff;transform:scaleX(0.962);transform-origin:0 0;">Compiled Note</div>
<div class="a" style="left:1118.5px;top:4.6px;width:85px;height:23.7px;border-radius:8px;background:#d9f8b8"></div>
<div class="t" style="left:1127.6px;top:9.70px;font-size:14.49px;color:#46512e;transform:scaleX(0.990);transform-origin:0 0;">Work Area</div>
</div>
<div class="a" style="left:0.0px;top:296.8px;width:1212px;height:135.5px;border-radius:9px;background:#fff;box-shadow:0 0 3.5px rgba(0,0,0,.25);overflow:hidden">
<div class="a" style="left:0;top:32px;width:1212px;height:104px;background:#fff3d5"></div>
<svg style="left:12px;top:10px" width="10" height="14" viewBox="0 0 10 14"><path d="M2 1.5l5.5 5.5L2 12.5" fill="none" stroke="#333" stroke-width="1.7"/></svg>
<div class="t" style="left:33.0px;top:9.40px;font-size:14.93px;color:#333;transform:scaleX(0.920);transform-origin:0 0;-webkit-text-stroke:0.7px #333;">Quick Note</div>
<div class="t" style="left:109.3px;top:10.50px;font-size:12.32px;color:#333;transform:scaleX(0.935);transform-origin:0 0;">Sep. 19, 2025 1:51 PM</div>
<div class="a" style="left:235.6px;top:6.5px;width:63.6px;height:19.5px;border-radius:7px;background:#fdd466"></div>
<div class="t" style="left:240.9px;top:10.50px;font-size:12.32px;color:#444;transform:scaleX(0.852);transform-origin:0 0;">In Progress</div>
<div class="a" style="left:999.5px;top:4.6px;width:111px;height:23.7px;border-radius:8px;background:#c2e0ee"></div>
<div class="t" style="left:1009.2px;top:9.70px;font-size:14.49px;color:#fff;transform:scaleX(0.962);transform-origin:0 0;">Compiled Note</div>
<div class="a" style="left:1118.5px;top:4.6px;width:85px;height:23.7px;border-radius:8px;background:#d9f8b8"></div>
<div class="t" style="left:1127.6px;top:9.70px;font-size:14.49px;color:#46512e;transform:scaleX(0.990);transform-origin:0 0;">Work Area</div>
</div>
<div class="a" style="left:0.0px;top:441.8px;width:1212px;height:32.2px;border-radius:9px;background:#fff;box-shadow:0 0 3.5px rgba(0,0,0,.25);overflow:hidden">
<svg style="left:9px;top:12px" width="15" height="10" viewBox="0 0 15 10"><path d="M1.2 1.5l6.3 6.3 6.3-6.3" fill="none" stroke="#333" stroke-width="1.7"/></svg>
<div class="t" style="left:33.0px;top:9.40px;font-size:14.93px;color:#333;transform:scaleX(0.919);transform-origin:0 0;-webkit-text-stroke:0.7px #333;">Couples/Family Therapy</div>
<div class="t" style="left:189.8px;top:10.50px;font-size:12.32px;color:#333;transform:scaleX(0.935);transform-origin:0 0;">Sep. 19, 2025 1:51 PM</div>
<div class="a" style="left:316.1px;top:6.5px;width:63.6px;height:19.5px;border-radius:7px;background:#fdd466"></div>
<div class="t" style="left:321.4px;top:10.50px;font-size:12.32px;color:#444;transform:scaleX(0.852);transform-origin:0 0;">In Progress</div>
<div class="a" style="left:999.5px;top:4.6px;width:111px;height:23.7px;border-radius:8px;background:#c2e0ee"></div>
<div class="t" style="left:1009.2px;top:9.70px;font-size:14.49px;color:#fff;transform:scaleX(0.962);transform-origin:0 0;">Compiled Note</div>
<div class="a" style="left:1118.5px;top:4.6px;width:85px;height:23.7px;border-radius:8px;background:#d9f8b8"></div>
<div class="t" style="left:1127.6px;top:9.70px;font-size:14.49px;color:#46512e;transform:scaleX(0.990);transform-origin:0 0;">Work Area</div>
</div>
<div class="a" style="left:0.0px;top:483.7px;width:1212px;height:135.5px;border-radius:9px;background:#fff;box-shadow:0 0 3.5px rgba(0,0,0,.25);overflow:hidden">
<div class="a" style="left:0;top:32px;width:1212px;height:104px;background:#fff3d5"></div>
<svg style="left:12px;top:10px" width="10" height="14" viewBox="0 0 10 14"><path d="M2 1.5l5.5 5.5L2 12.5" fill="none" stroke="#333" stroke-width="1.7"/></svg>
<div class="t" style="left:33.0px;top:9.40px;font-size:14.93px;color:#333;transform:scaleX(0.934);transform-origin:0 0;-webkit-text-stroke:0.7px #333;">Individual Therapy</div>
<div class="t" style="left:155.1px;top:10.50px;font-size:12.32px;color:#333;transform:scaleX(0.935);transform-origin:0 0;">Sep. 19, 2025 1:50 PM</div>
<div class="a" style="left:281.4px;top:6.5px;width:63.6px;height:19.5px;border-radius:7px;background:#fdd466"></div>
<div class="t" style="left:286.7px;top:10.50px;font-size:12.32px;color:#444;transform:scaleX(0.852);transform-origin:0 0;">In Progress</div>
<div class="a" style="left:999.5px;top:4.6px;width:111px;height:23.7px;border-radius:8px;background:#c2e0ee"></div>
<div class="t" style="left:1009.2px;top:9.70px;font-size:14.49px;color:#fff;transform:scaleX(0.962);transform-origin:0 0;">Compiled Note</div>
<div class="a" style="left:1118.5px;top:4.6px;width:85px;height:23.7px;border-radius:8px;background:#d9f8b8"></div>
<div class="t" style="left:1127.6px;top:9.70px;font-size:14.49px;color:#46512e;transform:scaleX(0.990);transform-origin:0 0;">Work Area</div>
</div>
<div class="a" style="left:1212.5px;top:5.699999999999989px;width:15px;height:482px;background:#fafafa"></div>
<svg style="left:1216.0px;top:11px" width="9" height="7" viewBox="0 0 9 7"><path d="M0.5 6.5h8L4.5 0.8z" fill="#888"/></svg>
<div class="a" style="left:1216.0px;top:24.5px;width:8px;height:287px;border-radius:4px;background:#8a8a8a"></div>
<svg style="left:1216.0px;top:476.5px" width="9" height="7" viewBox="0 0 9 7"><path d="M0.5 0.5h8L4.5 6.2z" fill="#888"/></svg>
</div>
<div class="a" style="left:1605px;top:267px;width:234px;height:50px;border:3.3px solid #8b0000"></div>
<svg style="left:1752px;top:213px" width="20" height="52" viewBox="0 0 20 52"><path d="M9.8 1v30" stroke="#8b0000" stroke-width="3.4"/><path d="M2 27.5h15.5L9.8 51z" fill="#8b0000"/></svg>
<div class="t" style="left:620.0px;top:774.10px;font-size:16.96px;font-weight:bold;color:#111;transform:scaleX(0.854);transform-origin:0 0;">Assessments/Evaluation</div>
<div class="t" style="left:1035.0px;top:774.10px;font-size:16.96px;font-weight:bold;color:#111;transform:scaleX(0.883);transform-origin:0 0;">Notes</div>
<div class="t" style="left:1449.6px;top:774.10px;font-size:16.96px;font-weight:bold;color:#111;transform:scaleX(0.920);transform-origin:0 0;">Other</div>
<div class="a" style="left:620px;top:800.4px;width:399px;height:23.2px;border-radius:6px;background:linear-gradient(#c8f296,#a9e36d);box-shadow:0 1px 2px rgba(0,0,0,.25)"></div>
<div class="t" style="left:802.8px;top:806.35px;font-size:12.61px;color:#444;transform:scaleX(0.937);transform-origin:0 0;">ASAM</div>
<div class="a" style="left:620px;top:832.4px;width:399px;height:23.2px;border-radius:6px;background:linear-gradient(#c8f296,#a9e36d);box-shadow:0 1px 2px rgba(0,0,0,.25)"></div>
<div class="t" style="left:765.0px;top:838.35px;font-size:12.61px;color:#444;transform:scaleX(0.937);transform-origin:0 0;">Complete Evaluation</div>
<div class="a" style="left:620px;top:865.6px;width:399px;height:23.2px;border-radius:6px;background:linear-gradient(#c8f296,#a9e36d);box-shadow:0 1px 2px rgba(0,0,0,.25)"></div>
<div class="t" style="left:770.3px;top:871.55px;font-size:12.61px;color:#444;transform:scaleX(0.912);transform-origin:0 0;">Forms/Assessment</div>
<div class="a" style="left:1035px;top:800.6px;width:195px;height:23.2px;border-radius:6px;background:linear-gradient(#2089bc,#136c99);box-shadow:0 1px 2px rgba(0,0,0,.3)"></div>
<div class="t" style="left:1095.0px;top:806.55px;font-size:12.61px;color:#fff;transform:scaleX(0.932);transform-origin:0 0;">Progress Note</div>
<div class="a" style="left:1238px;top:800.6px;width:195px;height:23.2px;border-radius:6px;background:#b5d7e4"></div>
<div class="t" style="left:1314.5px;top:806.55px;font-size:12.61px;color:#e6f3f8;transform:scaleX(0.967);transform-origin:0 0;">Nursing</div>
<div class="a" style="left:1035px;top:832.6px;width:398px;height:23.2px;border-radius:6px;background:linear-gradient(#2089bc,#136c99);box-shadow:0 1px 2px rgba(0,0,0,.3)"></div>
<div class="t" style="left:1185.2px;top:838.55px;font-size:12.61px;color:#fff;transform:scaleX(0.916);transform-origin:0 0;">Case Management</div>
<div class="a" style="left:1035px;top:865.8px;width:398px;height:23.2px;border-radius:6px;background:linear-gradient(#2089bc,#136c99);box-shadow:0 1px 2px rgba(0,0,0,.3)"></div>
<div class="t" style="left:1169.9px;top:871.75px;font-size:12.61px;color:#fff;transform:scaleX(0.940);transform-origin:0 0;">Couples/Family Therapy</div>
<div class="a" style="left:1035px;top:897.8px;width:195px;height:23.2px;border-radius:6px;background:linear-gradient(#2089bc,#136c99);box-shadow:0 1px 2px rgba(0,0,0,.3)"></div>
<div class="t" style="left:1102.7px;top:903.75px;font-size:12.61px;color:#fff;transform:scaleX(0.956);transform-origin:0 0;">Quick Note</div>
<div class="a" style="left:1238px;top:897.8px;width:195px;height:23.2px;border-radius:6px;background:linear-gradient(#2089bc,#136c99);box-shadow:0 1px 2px rgba(0,0,0,.3)"></div>
<div class="t" style="left:1305.5px;top:903.75px;font-size:12.61px;color:#fff;transform:scaleX(0.925);transform-origin:0 0;">SOAP Note</div>
<div class="a" style="left:1449px;top:800.2px;width:196px;height:23.2px;border-radius:6px;background:linear-gradient(#ffffff,#f1f1f1);box-shadow:0 1px 2px rgba(0,0,0,.25)"></div>
<div class="t" style="left:1503.5px;top:806.15px;font-size:12.61px;color:#333;transform:scaleX(0.914);transform-origin:0 0;">Clinical Message</div>
<div class="a" style="left:1653px;top:800.2px;width:195px;height:23.2px;border-radius:6px;background:linear-gradient(#ffffff,#f1f1f1);box-shadow:0 1px 2px rgba(0,0,0,.25)"></div>
<div class="t" style="left:1705.1px;top:806.15px;font-size:12.61px;color:#333;transform:scaleX(0.926);transform-origin:0 0;">Clinical Summary</div>
<div class="a" style="left:1449px;top:832.2px;width:196px;height:23.2px;border-radius:6px;background:linear-gradient(#ffffff,#f1f1f1);box-shadow:0 1px 2px rgba(0,0,0,.25)"></div>
<div class="t" style="left:1505.0px;top:838.15px;font-size:12.61px;color:#333;transform:scaleX(0.921);transform-origin:0 0;">Therapy Groups</div>
<div class="a" style="left:1653px;top:832.2px;width:195px;height:23.2px;border-radius:6px;background:#e2e2e2;box-shadow:0 1.5px 2.5px rgba(0,0,0,.10),0 0 1px rgba(0,0,0,.08)"></div>
<div class="t" style="left:1708.5px;top:838.15px;font-size:12.61px;color:#8a8a8a;transform:scaleX(0.928);transform-origin:0 0;">Encounter Form</div>
<div class="a" style="left:1449px;top:865.4px;width:196px;height:23.2px;border-radius:6px;background:#e2e2e2;box-shadow:0 1.5px 2.5px rgba(0,0,0,.10),0 0 1px rgba(0,0,0,.08)"></div>
<div class="t" style="left:1515.0px;top:871.35px;font-size:12.61px;color:#8a8a8a;transform:scaleX(0.923);transform-origin:0 0;">EOC / UB04</div>
<div class="a" style="left:1653px;top:865.4px;width:195px;height:23.2px;border-radius:6px;background:#e2e2e2;box-shadow:0 1.5px 2.5px rgba(0,0,0,.10),0 0 1px rgba(0,0,0,.08)"></div>
<div class="t" style="left:1717.0px;top:871.35px;font-size:12.61px;color:#8a8a8a;transform:scaleX(0.920);transform-origin:0 0;">Review MAR</div>

</body></html>
